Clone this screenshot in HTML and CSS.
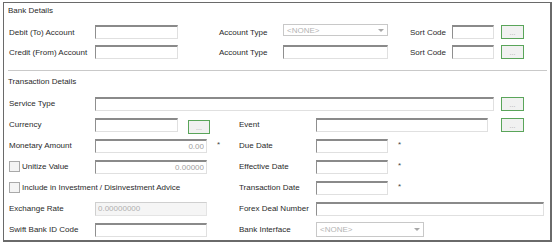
FILE: index.html
```html
<!DOCTYPE html>
<html lang="en">
<head>
  <meta charset="UTF-8" />
  <title>Bank and Transaction Details</title>
  <link rel="stylesheet" href="styles.css">
</head>
<body>
  <div class="frame">
    <!-- Bank Details -->
    <div class="group-title">Bank Details</div>
    <div class="group bank">
      <div class="row">
        <div class="left">
          <label class="label">Debit (To) Account</label>
          <input type="text" class="w83">
        </div>
        <label class="label type-label">Account Type</label>
        <div class="select w105 up"><span>&lt;NONE&gt;</span><span class="arrow"></span></div>
        <label class="label sort-label">Sort Code</label>
        <input type="text" class="w42">
        <button class="dots">...</button>
      </div>
      <div class="row">
        <div class="left">
          <label class="label">Credit (From) Account</label>
          <input type="text" class="w83">
        </div>
        <label class="label type-label">Account Type</label>
        <input type="text" class="w105">
        <label class="label sort-label">Sort Code</label>
        <input type="text" class="w42">
        <button class="dots">...</button>
      </div>
    </div>

    <div class="separator"></div>

    <!-- Transaction Details -->
    <div class="group-title">Transaction Details</div>
    <div class="group trans">
      <div class="row">
        <label class="label">Service Type</label>
        <input type="text" class="w399">
        <button class="dots">...</button>
      </div>
      <div class="row">
        <div class="left">
          <label class="label">Currency</label>
          <input type="text" class="w83">
          <button class="dots small">...</button>
        </div>
        <label class="label right-label">Event</label>
        <input type="text" class="w172">
        <button class="dots event-btn">...</button>
      </div>
      <div class="row">
        <div class="left">
          <label class="label">Monetary Amount</label>
          <input type="text" class="w112 num" value="0.00">
          <span class="star">*</span>
        </div>
        <label class="label right-label">Due Date</label>
        <input type="text" class="w72">
        <span class="star">*</span>
      </div>
      <div class="row">
        <div class="left">
          <label class="check label"><input type="checkbox"><span>Unitize Value</span></label>
          <input type="text" class="w112 num" value="0.00000">
        </div>
        <label class="label right-label">Effective Date</label>
        <input type="text" class="w72">
        <span class="star">*</span>
      </div>
      <div class="row">
        <div class="left">
          <label class="check"><input type="checkbox"><span>Include in Investment / Disinvestment Advice</span></label>
        </div>
        <label class="label right-label">Transaction Date</label>
        <input type="text" class="w72">
        <span class="star">*</span>
      </div>
      <div class="row">
        <div class="left">
          <label class="label">Exchange Rate</label>
          <input type="text" class="w112" value="0.00000000" disabled>
        </div>
        <label class="label right-label">Forex Deal Number</label>
        <input type="text" class="w228">
      </div>
      <div class="row">
        <div class="left">
          <label class="label">Swift Bank ID Code</label>
          <input type="text" class="w112">
        </div>
        <label class="label right-label">Bank Interface</label>
        <div class="select w108"><span>&lt;NONE&gt;</span><span class="arrow"></span></div>
      </div>
    </div>
  </div>
</body>
</html>
```

FILE: styles.css
```css
* {
  margin: 0;
  padding: 0;
  box-sizing: border-box;
}
body {
  font-family: "Liberation Sans", Arial, sans-serif;
  font-size: 8px;
  color: #2a2a2a;
  background: #fff;
}
.frame {
  margin: 2px 0 0 3px;
  width: 549px;
  height: 240px;
  border: 1px solid #6a6a6a;
  border-right-width: 2px;
  border-bottom-width: 2px;
}
.group-title {
  height: 16px;
  line-height: 16px;
  padding-left: 4px;
}
.group {
  padding-left: 5px;
  margin-top: 3px;
}
.row {
  display: flex;
  align-items: center;
  height: 20px;
}
.trans .row {
  height: 21px;
}
.left {
  display: flex;
  align-items: center;
  width: 230px;
}
.bank .left {
  width: 210px;
}
.label {
  width: 86px;
  white-space: nowrap;
}
.type-label {
  width: 64px;
}
.sort-label {
  width: 42px;
  margin-left: 22px;
}
.right-label {
  width: 77px;
}
.separator {
  margin: 8px 3px 3px 4px;
  border-top: 1px solid #c9c9c9;
}

input[type="text"] {
  height: 14px;
  font: inherit;
  color: #a0a0a0;
  padding: 0 2px;
  background: #fff;
  border: 1px solid;
  border-top-width: 2px;
  border-color: #8a8a8a #e0e0e0 #e0e0e0 #8f8f8f;
  outline: none;
}
input.num {
  text-align: right;
}
input[disabled] {
  background: #f5f5f5;
  border-color: #cfcfcf #e4e4e4 #e4e4e4 #cfcfcf;
  border-top-width: 1px;
  color: #b0b0b0;
}
.w42 { width: 42px; }
.w72 { width: 72px; }
.w83 { width: 83px; }
.w105 { width: 105px; }
.w108 { width: 108px; }
.w112 { width: 112px; }
.w172 { width: 172px; }
.w228 { width: 228px; }
.w399 { width: 399px; }

.select {
  display: flex;
  align-items: center;
  justify-content: space-between;
  height: 13px;
  padding: 0 3px;
  border: 1px solid #c8c8c8;
  color: #b4b4b4;
  background: #fff;
}
.bank .select {
  height: 12px;
}
.select.up {
  margin-bottom: 4px;
}
.trans .select {
  height: 15px;
}
.arrow {
  width: 0;
  height: 0;
  border-left: 3px solid transparent;
  border-right: 3px solid transparent;
  border-top: 3px solid #a8a8a8;
}

.dots {
  width: 23px;
  height: 14px;
  margin-left: 7px;
  border: 1px solid #5aa55a;
  background: #f1f1f1;
  color: #a8a8a8;
  font: inherit;
  font-size: 7px;
  line-height: 14px;
}
.dots.small {
  width: 22px;
  margin-left: 10px;
  margin-top: 4px;
}
.dots.event-btn {
  margin-left: 13px;
}
.star {
  margin-left: 10px;
  margin-bottom: 3px;
  color: #444;
}

.check {
  display: flex;
  align-items: center;
  white-space: nowrap;
}
.check input {
  appearance: none;
  width: 11px;
  height: 11px;
  margin-right: 2px;
  border: 1px solid #a9a9a9;
  background: #f4f4f4;
}
```
